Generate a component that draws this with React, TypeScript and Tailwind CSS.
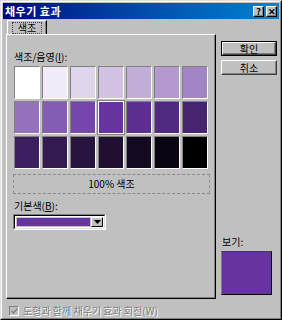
import React from "react";

const BASE = [102, 51, 160];

function swatchColor(i: number): string {
  let r: number, g: number, b: number;
  if (i <= 10) {
    const t = i / 10;
    r = 255 * (1 - t) + BASE[0] * t;
    g = 255 * (1 - t) + BASE[1] * t;
    b = 255 * (1 - t) + BASE[2] * t;
  } else {
    const s = 1 - (i - 10) / 10;
    r = BASE[0] * s;
    g = BASE[1] * s;
    b = BASE[2] * s;
  }
  return `rgb(${Math.round(r)},${Math.round(g)},${Math.round(b)})`;
}

function Btn({ children, def }: { children: React.ReactNode; def?: boolean }) {
  return (
    <div className={def ? "w-[56px] h-[15px] border border-black" : "w-[56px] h-[15px]"}>
      <div className="h-full border border-t-white border-l-white border-r-[#404040] border-b-[#404040] shadow-[inset_-1px_-1px_0_#808080] flex items-center justify-center text-[10px] leading-none text-black">
        {children}
      </div>
    </div>
  );
}

function TitleBtn({ children }: { children: React.ReactNode }) {
  return (
    <div className="w-[11px] h-[11px] bg-[#c0c0c0] border border-t-white border-l-white border-r-black border-b-black shadow-[inset_-1px_-1px_0_#808080] flex items-center justify-center text-[9px] font-bold leading-none text-black">
      {children}
    </div>
  );
}

export default function App() {
  const cells = Array.from({ length: 21 }, (_, i) => i);
  return (
    <div className="w-[282px] h-[320px] bg-[#c0c0c0] border border-t-[#dfdfdf] border-l-[#dfdfdf] border-r-black border-b-black font-['Noto_Sans_CJK_KR','Noto_Sans',sans-serif] text-black select-none">
      <div className="h-full border border-t-white border-l-white border-r-[#808080] border-b-[#808080] p-px flex flex-col">
        {/* Title bar */}
        <div className="h-[16px] flex items-center justify-between bg-gradient-to-r from-[#000080] to-[#1084d0] pl-[2px] pr-[2px]">
          <span className="text-white text-[11px] font-semibold leading-none tracking-[0.5px]">채우기 효과</span>
          <div className="flex gap-[2px]">
            <TitleBtn>?</TitleBtn>
            <TitleBtn>✕</TitleBtn>
          </div>
        </div>

        {/* Body */}
        <div className="flex pl-[3px]">
          {/* Left column */}
          <div className="flex flex-col w-[210px]">
            <div className="mt-px h-[14px] ml-px w-[40px] border-t border-l border-t-white border-l-white border-r border-r-black shadow-[inset_-1px_0_0_#808080] flex items-center justify-center">
              <div className="px-[5px] h-[12px] border border-dotted border-[#404040] flex items-center text-[10px] leading-none">색조</div>
            </div>
            <div className="h-[265px] border border-t-white border-l-white border-r-black border-b-black shadow-[inset_-1px_-1px_0_#808080] pl-[6px] flex flex-col">
              <div className="mt-[16px] text-[10px] leading-[12px] ml-px">색조/음영(<span className="underline">I</span>):</div>
              <div className="mt-[3px] ml-px grid grid-cols-[repeat(7,26px)] grid-rows-[repeat(3,33px)] gap-[2px]">
                {cells.map((i) => (
                  <div
                    key={i}
                    className={
                      i === 10
                        ? "border border-white outline outline-1 outline-[#808080]"
                        : "border border-t-[#808080] border-l-[#808080] border-r-white border-b-white"
                    }
                    style={{ backgroundColor: swatchColor(i) }}
                  />
                ))}
              </div>
              <div className="mt-[5px] w-[197px] h-[20px] border border-dashed border-[#8a8a8a] flex items-center justify-center text-[10px] leading-none">
                100% 색조
              </div>
              <div className="mt-[6px] text-[10px] leading-[12px] ml-px">기본색(<span className="underline">B</span>):</div>
              <div className="mt-[2px] w-[93px] h-[16px] border border-t-[#808080] border-l-[#808080] border-r-white border-b-white">
                <div className="h-full border border-t-black border-l-black border-r-[#dfdfdf] border-b-[#dfdfdf] bg-white flex items-center p-px">
                  <div className="flex-1 h-full bg-[#6633a0] border border-[#c0c0c0]" />
                  <div className="w-[12px] h-full bg-[#c0c0c0] border border-t-white border-l-white border-r-black border-b-black flex items-center justify-center">
                    <svg width="7" height="4" viewBox="0 0 7 4">
                      <polygon points="0,0 7,0 3.5,4" fill="#000" />
                    </svg>
                  </div>
                </div>
              </div>
            </div>
          </div>

          {/* Right column */}
          <div className="ml-[5px] flex flex-col justify-between pb-[4px]">
            <div className="mt-[22px] flex flex-col gap-[4px]">
              <Btn def>확인</Btn>
              <Btn>취소</Btn>
            </div>
            <div className="flex flex-col">
              <div className="text-[10px] leading-[12px] ml-px">보기:</div>
              <div className="mt-[3px] w-[51px] h-[44px] bg-[#6633a0] border border-t-[#404040] border-l-[#808080] border-r-black border-b-black" />
            </div>
          </div>
        </div>

        {/* Bottom checkbox */}
        <div className="mt-[6px] ml-[6px] flex items-center gap-[4px]">
          <div className="w-[10px] h-[10px] border border-t-[#808080] border-l-[#808080] border-r-white border-b-white bg-[#c0c0c0] flex items-center justify-center">
            <svg width="7" height="6" viewBox="0 0 7 6">
              <polyline points="0.5,3 2.5,5 6.5,0.5" fill="none" stroke="#808080" strokeWidth="1.5" />
            </svg>
          </div>
          <span className="text-[10px] leading-[12px] text-[#808080] [text-shadow:1px_1px_0_#ffffff]">
            도형과 함께 채우기 효과 회전(W)
          </span>
        </div>
      </div>
    </div>
  );
}
